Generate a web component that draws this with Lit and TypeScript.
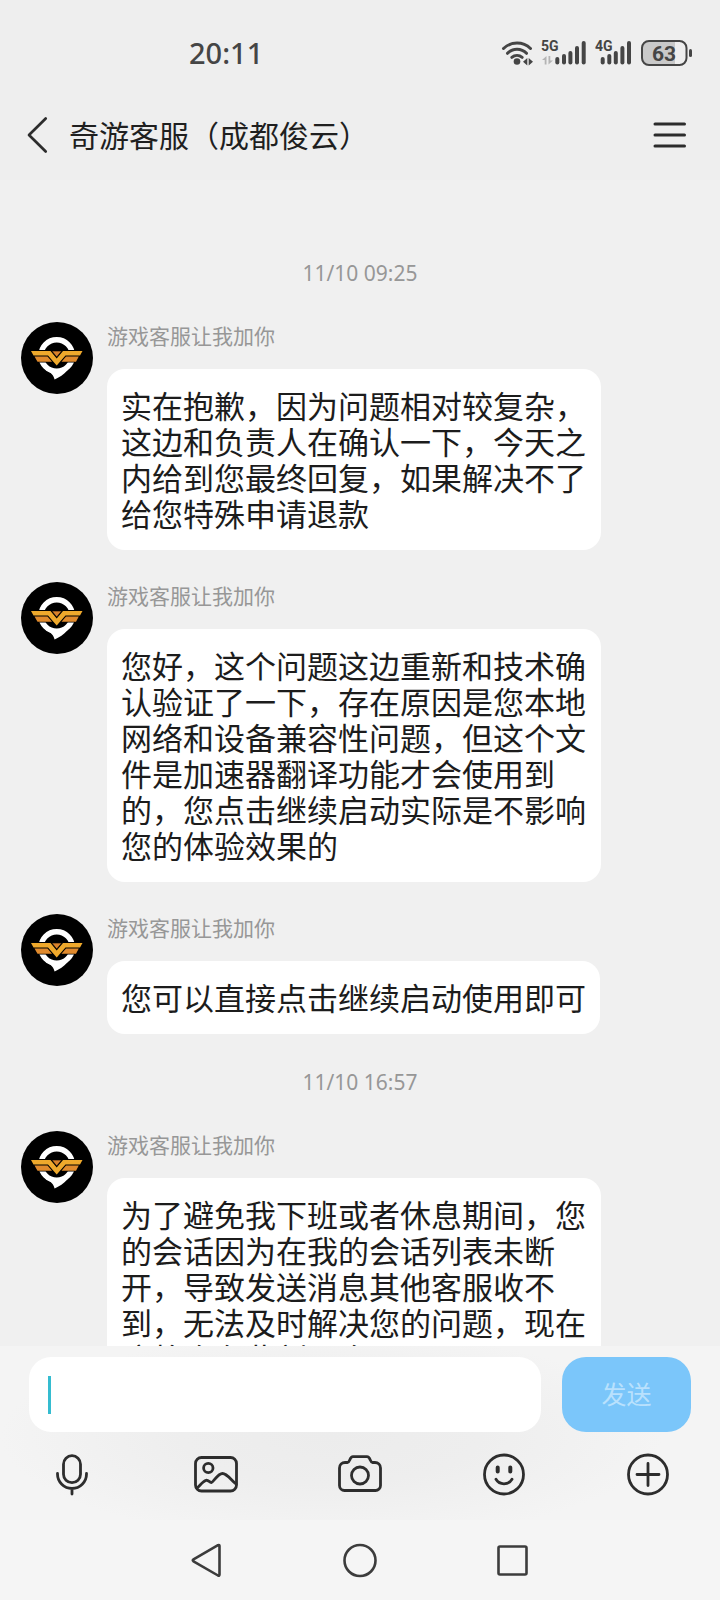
import { LitElement, html, svg, css, nothing } from "lit";
import { customElement, property, state } from "lit/decorators.js";

type Entry = { kind: "date"; text: string } | { kind: "message"; name: string; text: string };

const SENDER = "游戏客服让我加你";

const ENTRIES: Entry[] = [
  { kind: "date", text: "11/10 09:25" },
  { kind: "message", name: SENDER, text: "实在抱歉，因为问题相对较复杂，这边和负责人在确认一下，今天之内给到您最终回复，如果解决不了给您特殊申请退款" },
  { kind: "message", name: SENDER, text: "您好，这个问题这边重新和技术确认验证了一下，存在原因是您本地网络和设备兼容性问题，但这个文件是加速器翻译功能才会使用到的，您点击继续启动实际是不影响您的体验效果的" },
  { kind: "message", name: SENDER, text: "您可以直接点击继续启动使用即可" },
  { kind: "date", text: "11/10 16:57" },
  { kind: "message", name: SENDER, text: "为了避免我下班或者休息期间，您的会话因为在我的会话列表未断开，导致发送消息其他客服收不到，无法及时解决您的问题，现在这将会在此刻，会" },
];

@customElement("status-bar")
class StatusBar extends LitElement {
  static styles = css`
    :host { display: block; }
    .bar {
      display: flex; align-items: center; justify-content: space-between;
      height: 90px; box-sizing: border-box; padding: 16px 26px 0 189px;
      color: #454545;
    }
    .time { font: 500 29px/36px "Noto Sans", sans-serif; }
    .icons { display: flex; align-items: center; gap: 6px; }
    svg { display: block; }
    .net { font: 700 14px Roboto, sans-serif; fill: #454545; }
    .level { font: 700 21px Roboto, sans-serif; fill: #454545; }
  `;

  private signal(label: string, xs: number[], width: number, arrows: boolean) {
    const tops = [20, 17, 14, 9, 4];
    return html`<svg width=${width} height="28" viewBox="0 0 ${width} 28" role="img" aria-label=${label}>
      <g stroke="#454545" stroke-width="4" stroke-linecap="round">
        ${xs.map((x, i) => svg`<path d="M${x} ${tops[i]}V23.5"/>`)}
      </g>
      <text class="net" x="1" y="12">${label}</text>
      ${arrows
        ? svg`<g fill="#b4b4b4"><path d="M6.5 17v8.5h-1.800v-4.500H2z"/><path d="M8.500 25.500V17h1.800v4.500H13z"/></g>`
        : nothing}
    </svg>`;
  }

  render() {
    return html`<div class="bar">
      <span class="time">20:11</span>
      <div class="icons">
        <svg width="34" height="28" viewBox="0 0 34 28" role="img" aria-label="Wi-Fi">
          <g fill="none" stroke="#454545" stroke-width="3" stroke-linecap="round">
            <path d="M3.500 9.500A19.300 19.300 0 0 1 30.500 9.500"/>
            <path d="M7.500 14.300A13 13 0 0 1 26.500 14.300"/>
            <path d="M11.800 18.300A8 8 0 0 1 22.200 18.300"/>
          </g>
          <circle cx="17" cy="22.500" r="3.300" fill="#454545"/>
          <path d="M27.300 19v7.500L23 22.700zM28.700 19v7.500L33 22.700z" fill="#454545"/>
        </svg>
        ${this.signal("5G", [17.3, 24, 30.4, 37, 43.7], 48, true)}
        ${this.signal("4G", [8.7, 15.3, 21.8, 28.4, 35], 40, false)}
        <svg width="54" height="28" viewBox="0 0 54 28" role="img" aria-label="63%">
          <path d="M8 3H35V25H8a6 6 0 0 1-6-6V9a6 6 0 0 1 6-6z" fill="#c9c9c9"/>
          <rect x="2" y="2" width="44.500" height="24" rx="7" fill="none" stroke="#454545" stroke-width="2"/>
          <path d="M50.500 11.500v5" stroke="#454545" stroke-width="3" stroke-linecap="round"/>
          <text class="level" x="24" y="21.500" text-anchor="middle">63</text>
        </svg>
      </div>
    </div>`;
  }
}

@customElement("chat-header")
class ChatHeader extends LitElement {
  @property() heading = "";
  static styles = css`
    :host { display: block; }
    header { display: flex; align-items: center; height: 90px; box-sizing: border-box; padding: 0 33px 0 26px; }
    h1 { flex: 1; margin: 0 0 3px 21px; font-size: 30px; line-height: 40px; font-weight: 400; color: #1f1f1f; }
    button { border: 0; padding: 0; background: none; display: block; }
    svg { display: block; }
  `;
  render() {
    return html`<header>
      <button aria-label="返回">
        <svg width="22" height="38" viewBox="0 0 22 38" fill="none" stroke="#2c2c2c" stroke-width="2.700" stroke-linecap="round" stroke-linejoin="round">
          <path d="M19.700 2.500L3 19L19.700 35.500"/>
        </svg>
      </button>
      <h1>${this.heading}</h1>
      <button aria-label="菜单">
        <svg width="34" height="28" viewBox="0 0 34 28" stroke="#2c2c2c" stroke-width="3" stroke-linecap="round">
          <path d="M2 3H31.500M2 14H31.500M2 25H31.500"/>
        </svg>
      </button>
    </header>`;
  }
}

@customElement("chat-message")
class ChatMessage extends LitElement {
  @property() name = "";
  @property() text = "";
  static styles = css`
    :host { display: block; }
    article { display: flex; gap: 14px; align-items: flex-start; padding: 0 21px; }
    .avatar { flex: none; display: block; }
    .body { display: flex; flex-direction: column; align-items: flex-start; }
    .name { height: 47px; font-size: 21px; line-height: 26px; color: #979797; }
    .bubble {
      margin: 0; box-sizing: border-box; max-width: 494px; padding: 18px 14px 19px;
      border-radius: 18px; background: #fff; color: #1c1c1c;
      font-size: 31px; line-height: 36px;
    }
  `;
  render() {
    return html`<article>
      <svg class="avatar" width="72" height="72" viewBox="0 0 72 72" role="img" aria-label=${this.name}>
        <circle cx="36" cy="36" r="36" fill="#000"/>
        <circle cx="35.700" cy="33.500" r="15.700" fill="none" stroke="#fff" stroke-width="5.500"/>
        <path d="M24 47.500C28 50 32 51 33.600 57.500C38 55.500 43 52.500 47 47.500L36 48z" fill="#fff"/>
        <path d="M8 28H63.500L57 40.500H39L35.700 45L32 40.500H15z" fill="#000"/>
        <path d="M10 29H29.500L35.700 36.500L42 29H61.500L59 33.500H44.500L35.700 43.500L27 33.500H12.500z" fill="#efa92c"/>
        <path d="M13.500 34.500H26.500L31 39.700H16.500zM57.800 34.500H45L40.500 39.700H55z" fill="#e08a2d"/>
        <path d="M30.800 29H40.700L35.700 35z" fill="#d9822b" stroke="#000" stroke-width=".6"/>
      </svg>
      <div class="body">
        <span class="name">${this.name}</span>
        <p class="bubble">${this.text}</p>
      </div>
    </article>`;
  }
}

@customElement("chat-composer")
class ChatComposer extends LitElement {
  @state() private draft = "";
  static styles = css`
    :host { display: block; }
    .panel {
      background:
        radial-gradient(ellipse 46% 60% at 46% 52%, #ececec 0%, #eeeeee 45%, #f4f4f400 100%),
        #f4f4f4;
    }
    form { display: flex; gap: 21px; padding: 11px 29px 0; }
    .field { flex: 1; min-width: 0; position: relative; }
    input {
      display: block; width: 100%; height: 75px; box-sizing: border-box; border: 0; outline: 0;
      border-radius: 22px; padding: 0 20px; background: #fff; color: #1c1c1c;
      font: inherit; font-size: 31px; caret-color: #35bcd0;
    }
    .caret { position: absolute; left: 19px; top: 19px; width: 3px; height: 38px; background: #35bcd0; }
    .send {
      flex: none; width: 129px; height: 75px; border: 0; padding: 0 0 4px; border-radius: 24px;
      background: #7bc6fa; color: #b9e1fd; font: inherit; font-size: 25px; line-height: 36px;
    }
    .tools { display: grid; grid-template-columns: repeat(5, 1fr); height: 88px; box-sizing: border-box; padding-bottom: 2px; }
    .tool { display: grid; place-items: center; border: 0; padding: 0; background: none; }
    .tool svg { display: block; }
  `;

  private tool(label: string, shape: unknown) {
    return html`<button class="tool" aria-label=${label}>
      <svg width="48" height="48" viewBox="0 0 48 48" fill="none" stroke="#2d2d2d" stroke-width="2.800" stroke-linecap="round" stroke-linejoin="round">${shape}</svg>
    </button>`;
  }

  render() {
    return html`<div class="panel">
      <form @submit=${(e: Event) => e.preventDefault()}>
        <div class="field">
          <input aria-label="消息" .value=${this.draft}
            @input=${(e: Event) => { this.draft = (e.target as HTMLInputElement).value; }}>
          ${this.draft ? nothing : html`<span class="caret"></span>`}
        </div>
        <button class="send">发送</button>
      </form>
      <div class="tools">
        ${this.tool("语音", svg`<rect x="15.500" y="4.700" width="17" height="27" rx="8.500"/><path d="M9.500 22.500V23a14.500 14.500 0 0 0 29 0v-.500M24 37.500V43"/>`)}
        ${this.tool("图片", svg`<rect x="3.500" y="6.500" width="41" height="33.500" rx="6"/><circle cx="16.300" cy="17" r="4.700"/><path d="M5 37C8.500 34 11 30 14 29.300C16.500 28.700 17.500 31.800 19.500 31.500C21.500 31 26 22.500 30.500 22.500C35 22.500 39 29 44 33"/>`)}
        ${this.tool("拍照", svg`<path d="M9 11.500H11.500C14 11.500 13.500 5.700 17 5.700H31C34.500 5.700 34 11.500 36.500 11.500H39A5.500 5.500 0 0 1 44.500 17V34.500A5 5 0 0 1 39.500 39.500H8.500A5 5 0 0 1 3.500 34.500V17A5.500 5.500 0 0 1 9 11.500z"/><circle cx="24" cy="24.500" r="8.500"/>`)}
        ${this.tool("表情", svg`<circle cx="24" cy="23.500" r="19.500"/><path d="M17.700 16.500V20.500M30.300 16.500V20.500" stroke-width="4"/><path d="M16 28.300C19.500 34.300 28.500 34.300 32 28.300"/>`)}
        ${this.tool("更多", svg`<circle cx="24" cy="23.500" r="19.500"/><path d="M13 23.500H35M24 12.500V34.500"/>`)}
      </div>
    </div>`;
  }
}

@customElement("system-nav")
class SystemNav extends LitElement {
  static styles = css`
    :host { display: block; }
    nav { display: flex; justify-content: center; align-items: center; gap: 117px; height: 80px; background: #f5f5f5; }
    button { border: 0; padding: 0; background: none; display: block; }
    svg { display: block; }
  `;
  private key(label: string, shape: unknown) {
    return html`<button aria-label=${label}>
      <svg width="36" height="36" viewBox="0 0 36 36" fill="none" stroke="#3c3c3c" stroke-width="2.600" stroke-linejoin="round">${shape}</svg>
    </button>`;
  }
  render() {
    return html`<nav>
      ${this.key("后退", svg`<path d="M4.500 17.300Q3 18.300 4.500 19.300L29 33.500Q30.500 34.100 30.500 32.500V4.100Q30.500 2.500 29 3.100z"/>`)}
      ${this.key("主页", svg`<circle cx="18" cy="18.500" r="15.500"/>`)}
      ${this.key("最近任务", svg`<rect x="3.500" y="4.500" width="28" height="28" rx="1.500"/>`)}
    </nav>`;
  }
}

@customElement("app-root")
class AppRoot extends LitElement {
  static styles = css`
    :host {
      display: flex; flex-direction: column; height: 100vh; overflow: hidden; background: #f0f0f0;
      font-family: "Noto Sans CJK SC", sans-serif;
    }
    .top { flex: none; background: #eee; }
    main { flex: 1; min-height: 0; overflow: hidden; display: flex; flex-direction: column; padding-top: 77px; }
    .date {
      flex: none; text-align: center; font: 400 21px/28px "Noto Sans", sans-serif; color: #979797;
      margin: 2px 0 35px;
    }
    chat-message { flex: none; margin-bottom: 32px; }
    .bottom { flex: none; }
  `;
  render() {
    return html`
      <div class="top">
        <status-bar></status-bar>
        <chat-header heading="奇游客服（成都俊云）"></chat-header>
      </div>
      <main>
        ${ENTRIES.map((e) =>
          e.kind === "date"
            ? html`<time class="date">${e.text}</time>`
            : html`<chat-message .name=${e.name} .text=${e.text}></chat-message>`
        )}
      </main>
      <div class="bottom">
        <chat-composer></chat-composer>
        <system-nav></system-nav>
      </div>`;
  }
}
